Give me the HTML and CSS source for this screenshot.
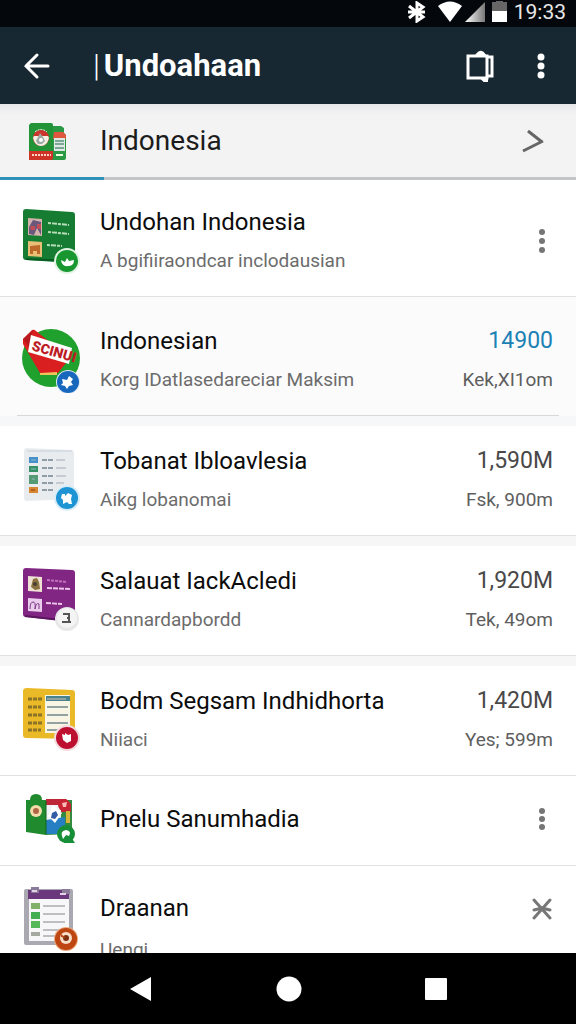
FILE: index.html
```html
<!DOCTYPE html>
<html lang="id">
<head>
  <meta charset="UTF-8" />
  <meta name="viewport" content="width=device-width, initial-scale=1.0"/>
  <title>Undoahaan</title>
  <link rel="stylesheet" href="styles.css">
</head>
<body>

  <!-- Status bar -->
  <div class="status-bar">
    <svg width="20" height="22" viewBox="0 0 20 22" fill="none" stroke="#fff" stroke-width="3"><path d="M2 5l14 11-6 4V2l6 4L2 17M1 11h17"/></svg>
    <svg class="wifi" width="26" height="22" viewBox="0 0 26 22"><path d="M1 5Q13-4 25 5L13 21z" fill="#fff"/></svg>
    <svg width="20" height="22" viewBox="0 0 20 22">
      <defs><linearGradient id="signal"><stop offset="0" stop-color="#fff"/><stop offset="1" stop-color="#777"/></linearGradient></defs>
      <path d="M0 21L20 1v20z" fill="url(#signal)"/>
    </svg>
    <svg class="battery" width="15" height="22" viewBox="0 0 15 22"><path d="M0 1h4V0h7v1h4v10H0z" fill="#666"/><path d="M0 10h15v11H0z" fill="#fff"/></svg>
    <span class="clock">19:33</span>
  </div>

  <!-- App bar -->
  <header class="app-bar">
    <button class="icon-btn" aria-label="Kembali">
      <svg width="28" height="28" viewBox="0 0 28 28" fill="none" stroke="#fff" stroke-width="3" stroke-linecap="round"><path d="M25 14H3M14 3L3 14l11 11"/></svg>
    </button>
    <h1><span class="bar">|</span>Undoahaan</h1>
    <button class="icon-btn" aria-label="Salin">
      <svg width="30" height="34" viewBox="0 0 30 34" fill="none" stroke="#fff" stroke-width="3"><path d="M3 7h19v22H3zM22 8h5v19h-5"/><path d="M12 5q4-5 8 1z M17 30h5v2h-3z" fill="#fff" stroke-width="2"/></svg>
    </button>
    <button class="icon-btn" aria-label="Menu">
      <svg width="8" height="26" viewBox="0 0 8 26" fill="#fff"><circle cx="4" cy="4" r="3.5"/><circle cx="4" cy="13" r="3.5"/><circle cx="4" cy="22" r="3.5"/></svg>
    </button>
  </header>

  <a class="section" href="#list">
    <svg class="thumb" width="60" height="44" viewBox="0 0 60 44">
      <path d="M33 7h8l3 2v5l2 2v23q0 2-2 2H32z" fill="#299943"/>
      <path d="M34 13h9l3 3v4H33z" fill="#df573e"/>
      <path d="M34 19h11v13H34z" fill="#dfe9e4"/>
      <path d="M35 22h9M35 25h9M35 29h9" stroke="#7da696" stroke-width="2"/>
      <path d="M36 36h7" stroke="#efd" stroke-width="2"/>
      <path d="M11 4h20q2 0 2 2v35H9V6z" fill="#239337"/>
      <path d="M9 32h24v7q0 2-2 2H9z" fill="#cf3327"/>
      <path d="M12 36h19" stroke="#ffd2c6" stroke-width="2" stroke-dasharray="2 1"/>
      <circle cx="21" cy="19" r="8" fill="#cc352b"/>
      <path d="M14 17h14l1 2q-2 8-8 8t-8-8z" fill="#f5eee3"/>
      <path d="M15 13q6-5 12 0" fill="none" stroke="#fff" stroke-dasharray="2 1"/>
      <path d="M20 14l3 4 2 4-3 3h-4l-2-3 2-4z" fill="#9caaa4"/><circle cx="21" cy="21" r="2" fill="#fff"/>
    </svg>
    <span>Indonesia</span>
    <svg width="24" height="26" viewBox="0 0 24 26" fill="none" stroke="#666" stroke-width="3"><path d="M7 3l14 11M22 13L2 23"/></svg>
  </a>
  <div class="progress"><div class="progress-value"></div></div>

  <!-- List -->
  <main id="list">
    <ul class="list">
      <li class="item first">
        <svg class="thumb" width="60" height="66" viewBox="0 0 60 66">
          <path d="M6 1l46 3q3 0 3 3v45q0 3-3 3L6 52q-3 0-3-3V4q0-3 3-3z" fill="#167c32"/>
          <path d="M6 51l46 2" stroke="#075b22" stroke-width="2"/>
          <path d="M8 10l14 1v17L8 27z" fill="#d4b2ae"/><path d="M9 19l4-7 8 2v13l-4-7-3 7-5-1z" fill="#69577c"/><path d="M10 18h5v4h-4zM17 16h4v5h-4z" fill="#c05057"/>
          <path d="M8 33l14 1v15L8 48z" fill="#e9bf78"/><path d="M10 38l10-1v9h-3v-3h-4v3h-3z" fill="#bd6929"/>
          <path d="M28 15l21 2M28 24l21 2M27 37l15 1" stroke="#b8ddb9" stroke-width="2" stroke-dasharray="3 1 5 1"/>
          <circle cx="47" cy="53" r="13" fill="#dff4e2"/><circle cx="47" cy="53" r="11" fill="#18962f"/>
          <path d="M41 52l4 2 2-4 2 3 5-1q0 6-6 6-6 1-7-6z" fill="#fff"/>
        </svg>
        <div class="text">
          <h2>Undohan Indonesia</h2>
          <p>A bgifiiraondcar inclodausian</p>
        </div>
        <button class="icon-btn row-btn" aria-label="Opsi">
          <svg width="8" height="26" viewBox="0 0 8 26" fill="#757575"><circle cx="4" cy="4" r="3"/><circle cx="4" cy="13" r="3"/><circle cx="4" cy="22" r="3"/></svg>
        </button>
      </li>

      <li class="item tinted">
        <svg class="thumb" width="60" height="66" viewBox="0 0 60 66">
          <circle cx="31" cy="31" r="29" fill="#20a02d"/>
          <path d="M3 12L12 3q2-1 4 1l34 27-12 15H20L3 17z" fill="#d91f20"/>
          <path d="M3 12L13 3 9 20z" fill="#b8191d"/>
          <path d="M20 46l17-1v3H20z" fill="#edc35b"/>
          <path d="M11 8l41 13-3 16L8 25z" fill="#fff"/>
          <text class="stamp" x="11" y="23" transform="rotate(16 11 23)">SCINUI</text>
          <circle cx="48" cy="55" r="12" fill="#dfe9f4"/><circle cx="48" cy="55" r="11" fill="#1767bd"/>
          <path d="M42 52l5 1 2-4 4 3-2 3 2 3-4 1-2 3-2-3-4-1 2-2z" fill="#fff"/>
        </svg>
        <div class="text">
          <h2>Indonesian</h2>
          <p>Korg IDatlasedareciar Maksim</p>
        </div>
        <div class="meta">
          <span class="amount blue">14900</span>
          <span class="note">Kek,XI1om</span>
        </div>
      </li>

      <li class="item card">
        <svg class="thumb" width="60" height="66" viewBox="0 0 60 66">
          <path d="M7 1l45 2q2 0 2 3v46L7 54q-3 0-3-3V4q0-3 3-3z" fill="#e9ecef"/>
          <path d="M7 4h45" stroke="#d7dde2" stroke-width="2"/>
          <path d="M9 10h9v6H9z" fill="#458fca"/><path d="M9 19h9v6H9z" fill="#369166"/><path d="M9 28h9v9H9z" fill="#549a75"/><path d="M9 40h9v6H9z" fill="#d68732"/>
          <path d="M11 13h5M11 22h5M12 32h3" stroke="#8bb9c5"/><path d="M11 43h4" stroke="#b85e21" stroke-width="2"/>
          <path d="M22 13h12M22 21h12M22 29h12M22 36h12M22 43h12" stroke="#919da6" stroke-width="2" stroke-dasharray="5 1"/>
          <path d="M36 13h9M36 21h10M36 29h10M36 36h8" stroke="#c5cbd0" stroke-width="2"/>
          <circle cx="47" cy="51" r="13" fill="#d9edf8"/><circle cx="47" cy="51" r="11" fill="#1f94d4"/>
          <path d="M42 47h3v2l3-3 4 2-1 4 1 5h-3l-2-2-4 2v-4l-2-2z" fill="#fff"/>
        </svg>
        <div class="text">
          <h2>Tobanat Ibloavlesia</h2>
          <p>Aikg lobanomai</p>
        </div>
        <div class="meta">
          <span class="amount">1,590M</span>
          <span class="note">Fsk, 900m</span>
        </div>
      </li>

      <li class="item card">
        <svg class="thumb" width="60" height="66" viewBox="0 0 60 66">
          <path d="M6 1l46 2q3 0 3 3v46q0 3-3 3L6 50q-3 0-3-3V4q0-3 3-3z" fill="#812683"/>
          <path d="M5 49l45 5" stroke="#5b165f" stroke-width="2"/>
          <path d="M8 9l14 1v15L8 24z" fill="#efe2d4"/><path d="M11 20l2-8 4-1 2 4 1 7-5 1z" fill="#8c7140"/><circle cx="15" cy="17" r="2" fill="#463d33"/>
          <path d="M8 31l14 1v13L8 44z" fill="#eacced"/><path d="M10 42q0-7 3-7t2 7q1-7 4-5v5" fill="none" stroke="#7d3b85" stroke-width="1"/>
          <path d="M27 13l20 2" stroke="#c171bd" stroke-width="2" stroke-dasharray="3 1"/><path d="M27 21l23 1M26 36l16 1" stroke="#edc5e9" stroke-width="2" stroke-dasharray="5 1"/>
          <circle cx="47" cy="52" r="12" fill="#e7e7e9"/><circle cx="47" cy="51" r="10" fill="#f4f4f4"/>
          <path d="M43 47h6v8M47 51h3M42 55h9" fill="none" stroke="#555" stroke-width="2"/>
        </svg>
        <div class="text">
          <h2>Salauat IackAcledi</h2>
          <p>Cannardapbordd</p>
        </div>
        <div class="meta">
          <span class="amount">1,920M</span>
          <span class="note">Tek, 49om</span>
        </div>
      </li>

      <li class="item last-card">
        <svg class="thumb" width="60" height="66" viewBox="0 0 60 66">
          <path d="M7 1l45 2q3 0 3 3v46L6 51q-3 0-3-3V4q0-3 4-3z" fill="#e9b927"/>
          <path d="M25 8h25v38H25z" fill="#f8f5e4"/><path d="M26 9h24v5H26z" fill="#49828f"/>
          <path d="M27 12h19M27 20h21M27 28h21M27 36h21M27 43h17" stroke="#91a2a0" stroke-width="2"/>
          <path d="M8 12h15M8 20h13M8 28h14M8 36h14M8 43h13" stroke="#8c7327" stroke-width="3" stroke-dasharray="4 1"/>
          <circle cx="47" cy="51" r="13" fill="#f3dce0"/><circle cx="47" cy="51" r="11" fill="#bd1031"/>
          <path d="M42 47l3 1v-2l3 2 3-1v7l-4 2-4-3z" fill="#fff"/>
        </svg>
        <div class="text">
          <h2>Bodm Segsam Indhidhorta</h2>
          <p>Niiaci</p>
        </div>
        <div class="meta">
          <span class="amount">1,420M</span>
          <span class="note">Yes; 599m</span>
        </div>
      </li>

      <li class="item short">
        <svg class="thumb" width="60" height="52" viewBox="0 0 60 52">
          <path d="M26 7h26v34L26 42z" fill="#328b40"/><path d="M26 6h20l5 5v8H26z" fill="#bd2539"/>
          <path d="M26 12h15v22H26z" fill="#eff3f5"/><path d="M26 27l19-3v17H26z" fill="#267fc3"/>
          <path d="M48 18v12" stroke="#d8b53c" stroke-width="4"/>
          <path d="M33 12l9 8-7 10-7-7z" fill="#fff"/><path d="M32 20l4-2 2 4-3 4-4-1z" fill="#345ca4"/>
          <circle cx="44" cy="12" r="6" fill="#c82332"/><path d="M42 10l5-1-1 5h-3z" fill="#ffb8b5"/>
          <path d="M6 7h4q0-6 6-6t6 6h4v35L6 39z" fill="#208a2e"/><path d="M26 8v33" stroke="#12671f"/>
          <circle cx="16" cy="18" r="6" fill="#f3dcac"/><circle cx="16" cy="18" r="3" fill="#ad6542"/>
          <circle cx="46" cy="41" r="9" fill="#178f38"/><path d="M46 44h5l4 6H44z" fill="#178f38"/>
          <path d="M43 46q-4-8 3-9 6 1 3 6l-3-1z" fill="#fff"/>
        </svg>
        <div class="text">
          <h2>Pnelu Sanumhadia</h2>
        </div>
        <button class="icon-btn row-btn" aria-label="Opsi">
          <svg width="8" height="26" viewBox="0 0 8 26" fill="#757575"><circle cx="4" cy="5" r="3"/><circle cx="4" cy="13" r="3"/><circle cx="4" cy="21" r="3"/></svg>
        </button>
      </li>

      <li class="item bottom">
        <svg class="thumb" width="60" height="66" viewBox="0 0 60 66">
          <path d="M6 3h45q2 0 2 2v52q0 2-2 2H6q-2 0-2-2V5q0-2 2-2z" fill="#aaa8b1"/>
          <path d="M9 10h40v45H9z" fill="#f7f6f8"/><path d="M8 4h41v9H8z" fill="#6b377d"/>
          <path d="M11 1h8v6h-8zM42 3h8v5h-8z" fill="#8a7b9a"/><path d="M12 5h5M40 8h6" stroke="#e3d2e7" stroke-width="2"/>
          <path d="M11 17h9v6h-9z" fill="#82b269"/><path d="M11 26h9v7h-9z" fill="#44ae53"/><path d="M11 35h9v7h-9z" fill="#55b858"/><path d="M11 46h9v4h-9z" fill="#a4aaa0"/>
          <path d="M23 20h22M23 28h22M23 36h22M23 44h17M23 50h13" stroke="#bfbfc2" stroke-width="2"/>
          <circle cx="46" cy="53" r="12" fill="#ecaa7c"/><circle cx="46" cy="53" r="11" fill="#bd4612"/>
          <circle cx="46" cy="52" r="6" fill="#f8dfca"/><circle cx="46" cy="52" r="3" fill="#7d3010"/><path d="M46 52l-5-4v3z" fill="#bd4612"/>
        </svg>
        <div class="text">
          <h2>Draanan</h2>
          <p>Uengi</p>
        </div>
        <button class="icon-btn row-btn" aria-label="Hapus">
          <svg width="20" height="22" viewBox="0 0 20 22" fill="none" stroke="#777" stroke-width="3" stroke-linecap="round"><path d="M2 2l16 18M18 2L2 20M2 12l8-2 8 2"/></svg>
        </button>
      </li>
    </ul>
  </main>

  <!-- System navigation -->
  <nav class="nav-bar">
    <button class="icon-btn" aria-label="Kembali"><svg width="24" height="26" viewBox="0 0 24 26"><path d="M1 13L22 1v24z" fill="#fff"/></svg></button>
    <button class="icon-btn" aria-label="Beranda"><svg width="26" height="26" viewBox="0 0 26 26"><circle cx="13" cy="13" r="12.5" fill="#fff"/></svg></button>
    <button class="icon-btn" aria-label="Terbaru"><svg width="22" height="22" viewBox="0 0 22 22"><rect width="22" height="22" rx="1" fill="#fff"/></svg></button>
  </nav>

</body>
</html>
```
FILE: styles.css
```css
* {
  box-sizing: border-box;
}
body {
  font-family: Roboto, "Liberation Sans", sans-serif;
  background-color: #fff;
  color: #0c0c0c;
  margin: 0;
  height: 100vh;
  display: flex;
  flex-direction: column;
}
h1, h2, p, ul {
  margin: 0;
  padding: 0;
}
svg {
  display: block;
  flex-shrink: 0;
}
.icon-btn {
  display: flex;
  align-items: center;
  justify-content: center;
  background: none;
  border: none;
  padding: 0;
  cursor: pointer;
}

/* Status bar */
.status-bar {
  display: flex;
  flex-shrink: 0;
  align-items: center;
  justify-content: flex-end;
  height: 27px;
  padding: 0 10px 4px 0;
  background-color: #04080c;
  color: #e8e8e8;
}
.wifi {
  margin-left: 10px;
  margin-right: 2px;
}
.battery {
  margin-left: 7px;
}
.clock {
  margin-left: 7px;
  font-size: 21px;
  line-height: 22px;
}

/* App bar */
.app-bar {
  display: flex;
  flex-shrink: 0;
  align-items: center;
  height: 77px;
  padding: 0 31px 0 23px;
  gap: 42px;
  background-color: #182833;
  color: #fff;
}
.app-bar h1 {
  flex: 1;
  font-size: 31px;
  line-height: 40px;
  font-weight: 700;
}
.bar {
  font-weight: 300;
  margin-right: 4px;
}

.section {
  display: flex;
  flex-shrink: 0;
  align-items: center;
  gap: 20px;
  height: 73px;
  padding: 0 31px 0 20px;
  background: linear-gradient(#e6e6e8, #f3f3f4 10px);
  color: #1c1c1c;
  font-size: 28px;
  text-decoration: none;
}
.section span {
  flex: 1;
}
.progress {
  flex-shrink: 0;
  height: 3px;
  background-color: #c4c5c7;
}
.progress-value {
  width: 18%;
  height: 3px;
  background-color: #2f91b8;
}

/* List */
main {
  flex: 1;
  min-height: 0;
  overflow: hidden;
}
.list {
  list-style: none;
}
.item {
  display: flex;
  align-items: center;
  gap: 20px;
  padding: 15px 23px 16px 20px;
  border-bottom: 1px solid #dfe1e3;
}
.text {
  flex: 1;
  min-width: 0;
  white-space: nowrap;
}
.item h2 {
  font-size: 24px;
  line-height: 40px;
  font-weight: 400;
}
.item p {
  font-size: 19px;
  line-height: 38px;
  color: #6c6c6c;
}
.stamp {
  font-size: 14px;
  font-weight: 900;
  fill: #bd1c25;
}
.row-btn {
  width: 22px;
}
.meta {
  display: flex;
  flex-direction: column;
  text-align: right;
}
.amount {
  font-size: 23px;
  line-height: 40px;
  color: #484848;
}
.amount.blue {
  color: #1c81b4;
}
.note {
  font-size: 19px;
  line-height: 38px;
  color: #5e5e5e;
}
.first {
  padding-top: 22px;
}
.tinted {
  position: relative;
  padding-top: 24px;
  padding-bottom: 27px;
  border-bottom: none;
  background: linear-gradient(#fbfbfc 119px, #f6f7f8 119px);
}
.tinted::after {
  content: "";
  position: absolute;
  left: 17px;
  right: 17px;
  bottom: 10px;
  height: 1px;
  background-color: #d6d8db;
}
.card {
  box-shadow: 0 10px #f6f6f7;
  margin-bottom: 10px;
}
.short {
  height: 90px;
  padding-top: 13px;
  padding-bottom: 17px;
}
.bottom {
  padding-top: 20px;
  align-items: flex-start;
  border-bottom: none;
}
.bottom .text {
  padding-top: 2px;
}
.bottom p {
  line-height: 44px;
}
.bottom .row-btn {
  height: 46px;
}

/* System navigation */
.nav-bar {
  display: flex;
  flex-shrink: 0;
  align-items: center;
  justify-content: center;
  gap: 123px;
  height: 71px;
  background-color: #000;
}
```
